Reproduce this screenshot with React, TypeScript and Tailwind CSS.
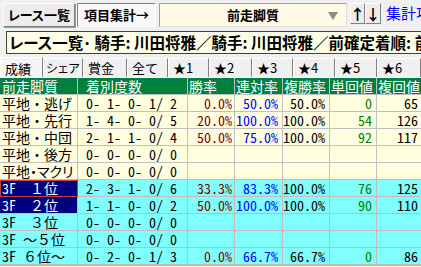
import React from "react";

type Row = {
  label: React.ReactNode;
  counts: string;
  win: string;
  ren: string;
  fuku: string;
  tan: string;
  fukuKai: string;
  cyan?: boolean;
  selected?: boolean;
  focused?: boolean;
};

const HW = "[font-feature-settings:'hwid']";

const f3 = (lead: string, rest: string) => (
  <>
    <span className={HW}>{lead}</span>
    {rest}
  </>
);

const rows: Row[] = [
  { label: "平地・逃げ", counts: "0- 1- 0- 1/ 2", win: "0.0%", ren: "50.0%", fuku: "50.0%", tan: "0", fukuKai: "65" },
  { label: "平地・先行", counts: "1- 4- 0- 0/ 5", win: "20.0%", ren: "100.0%", fuku: "100.0%", tan: "54", fukuKai: "126" },
  { label: "平地・中団", counts: "2- 1- 1- 0/ 4", win: "50.0%", ren: "75.0%", fuku: "100.0%", tan: "92", fukuKai: "117" },
  { label: "平地・後方", counts: "0- 0- 0- 0/ 0", win: "", ren: "", fuku: "", tan: "", fukuKai: "" },
  {
    label: <span className="[font-feature-settings:'palt']">平地・マクリ</span>,
    counts: "0- 0- 0- 0/ 0", win: "", ren: "", fuku: "", tan: "", fukuKai: "",
  },
  { label: f3("3F", "　１位"), counts: "2- 3- 1- 0/ 6", win: "33.3%", ren: "83.3%", fuku: "100.0%", tan: "76", fukuKai: "125", cyan: true, selected: true, focused: true },
  { label: f3("3F", "　２位"), counts: "1- 1- 0- 0/ 2", win: "50.0%", ren: "100.0%", fuku: "100.0%", tan: "90", fukuKai: "110", cyan: true, selected: true },
  { label: f3("3F", "　３位"), counts: "0- 0- 0- 0/ 0", win: "", ren: "", fuku: "", tan: "", fukuKai: "", cyan: true },
  { label: f3("3F ", "～５位"), counts: "0- 0- 0- 0/ 0", win: "", ren: "", fuku: "", tan: "", fukuKai: "", cyan: true },
  { label: f3("3F ", "６位～"), counts: "0- 2- 0- 1/ 3", win: "0.0%", ren: "66.7%", fuku: "66.7%", tan: "0", fukuKai: "86", cyan: true },
];

const tabs = [
  { t: "成績", c: "w-[43px] pl-[4px] text-[13px]" },
  { t: "シェア", c: "w-[40px] pl-[2px] text-[12px] tracking-[-1px]" },
  { t: "賞金", c: "w-[44px] pl-[4px] text-[13px]" },
  { t: "全て", c: "w-[41px] pl-[4px] text-[13px]" },
  { t: "★1", c: "w-[41px] pl-[4px] text-[13px]" },
  { t: "★2", c: "w-[43px] pl-[4px] text-[13px]" },
  { t: "★3", c: "w-[41px] pl-[4px] text-[13px]" },
  { t: "★4", c: "w-[42px] pl-[4px] text-[13px]" },
  { t: "★5", c: "w-[42px] pl-[4px] text-[13px]" },
  { t: "★6", c: "w-[44px] pl-[4px] text-[13px]" },
];

function DataRow({ row }: { row: Row }) {
  const line = row.cyan ? "border-[#c8b8b8]" : "border-[#c0c0c0]";
  const bg = row.cyan ? "bg-[#80ffff]" : "bg-[#ffffe0]";
  const cell = `h-[17px] shrink-0 border-r border-b ${line} leading-[16px] whitespace-pre overflow-hidden`;
  return (
    <div className={`flex ${bg}`}>
      <div
        className={`${cell} w-[78px] pl-[2px] ${
          row.selected ? "bg-[#000080] text-white" : ""
        } ${row.focused ? "outline outline-1 -outline-offset-1 outline-[#c04040]" : ""}`}
      >
        {row.label}
      </div>
      <div className={`${cell} ${HW} w-[110px] pl-[8px]`}>{row.counts}</div>
      <div className={`${cell} ${HW} w-[47px] pr-[2px] text-right text-[#800000]`}>{row.win}</div>
      <div className={`${cell} ${HW} w-[48px] pr-[4px] text-right text-[#0000ff]`}>{row.ren}</div>
      <div className={`${cell} ${HW} w-[47px] pr-[4px] text-right`}>{row.fuku}</div>
      <div className={`${cell} ${HW} w-[47px] pr-[4px] text-right text-[#008000]`}>{row.tan}</div>
      <div className={`${cell} ${HW} w-[47px] pr-[5px] text-right`}>{row.fukuKai}</div>
    </div>
  );
}

export default function App() {
  return (
    <div className="h-[267px] w-[421px] overflow-hidden bg-[#f0f0f0] font-['Noto_Sans_CJK_JP',sans-serif] text-black">
      {/* toolbar */}
      <div className="flex h-[30px] items-start overflow-hidden pl-[3px] pt-[3px]">
        <button className="flex h-[24px] w-[72px] shrink-0 items-center justify-center border border-t-white border-l-white border-r-[#808080] border-b-[#808080] bg-[#ececec] text-[13px] font-bold shadow-[1px_1px_0_#a0a0a0] [font-feature-settings:'palt']">
          レース一覧
        </button>
        <button className="ml-[2px] flex h-[24px] w-[79px] shrink-0 items-center justify-center border border-t-[#808080] border-l-[#808080] border-r-white border-b-white bg-[#f8f8f8] text-[13px] font-bold">
          項目集計→
        </button>
        <div className="relative ml-[3px] flex h-[24px] w-[188px] shrink-0 items-center justify-center border border-t-[#a0a0a0] border-l-[#a0a0a0] border-r-[#e0e0e0] border-b-[#e0e0e0] bg-[#fffbe6] text-[13px] font-bold">
          前走脚質
          <svg className="absolute right-[8px] top-[8px]" width="10" height="8" viewBox="0 0 10 8">
            <polygon points="0,0 10,0 5,8" fill="#8a8a8a" />
          </svg>
        </div>
        <button className="ml-[3px] flex h-[21px] w-[15px] shrink-0 items-center justify-center border border-t-white border-l-white border-r-[#808080] border-b-[#808080] bg-[#ececec] text-[15px] font-bold leading-none">
          ↑
        </button>
        <button className="flex h-[21px] w-[16px] shrink-0 items-center justify-center border border-t-white border-l-white border-r-[#808080] border-b-[#808080] bg-[#ececec] text-[15px] font-bold leading-none">
          ↓
        </button>
        <span className="ml-[5px] mt-[1px] shrink-0 whitespace-nowrap text-[15px] leading-[18px] text-[#0000ff]">集計項目</span>
      </div>

      {/* title */}
      <div className="ml-[6px] mt-[1px] flex h-[23px] items-center overflow-hidden whitespace-nowrap border border-[#404040] border-r-0 bg-[#ffffe8] pl-[2px] text-[15.5px] font-bold leading-none [font-feature-settings:'palt']">
        レース一覧･ 騎手: 川田将雅／騎手: 川田将雅／前確定着順: 前走
      </div>

      {/* tabs */}
      <div className="mt-[2px] flex h-[22px] items-end overflow-hidden border-b border-white">
        {tabs.map((tab, i) => (
          <div
            key={tab.t}
            className={`${tab.c} shrink-0 overflow-hidden whitespace-nowrap border-l border-t border-r border-l-white border-t-white border-r-[#808080] leading-[17px] ${
              i === 0 ? "-mb-px h-[21px] bg-[#f4f4f4] pt-[2px]" : "h-[19px] bg-[#f0f0f0]"
            }`}
          >
            {tab.t}
          </div>
        ))}
      </div>

      {/* grid */}
      <div className="w-[430px] text-[14px]">
        <div className="flex bg-[#008040] text-white">
          {[
            ["前走脚質", "w-[78px] pl-[2px]"],
            ["着別度数", "w-[110px] pl-[8px]"],
            ["勝率", "w-[47px] pl-[1px]"],
            ["連対率", "w-[48px] pl-[1px]"],
            ["複勝率", "w-[47px] pl-[1px]"],
            ["単回値", "w-[47px] pl-[1px]"],
            ["複回値", "w-[47px] pl-[1px]"],
          ].map(([t, c]) => (
            <div
              key={t}
              className={`${c} h-[17px] shrink-0 overflow-hidden border-r border-b border-[#c0c0c0] leading-[16px] whitespace-nowrap`}
            >
              {t}
            </div>
          ))}
        </div>
        {rows.map((r, i) => (
          <DataRow key={i} row={r} />
        ))}
        <div className="h-[4px] border-t border-[#e0b070] bg-[#ffffe0]" />
      </div>
    </div>
  );
}
